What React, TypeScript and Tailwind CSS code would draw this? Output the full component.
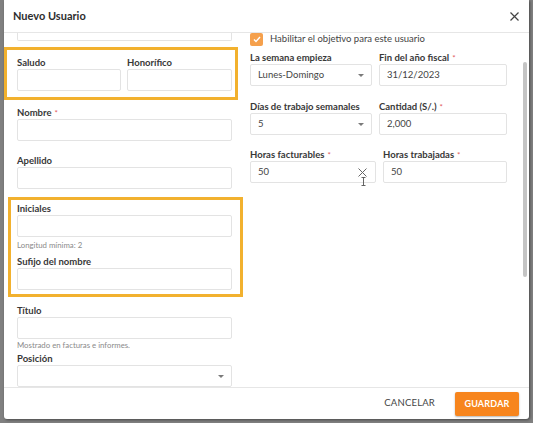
import React from 'react';

const font = { fontFamily: 'Lato, "Open Sans", sans-serif' };

const Label = ({ text, req }: { text: string; req?: boolean }) => (
  <div className="h-[13px] leading-[13px] text-[9.5px] font-bold text-[#383838] whitespace-nowrap">
    {text}
    {req && <span className="ml-[3px] text-[8px] font-normal text-[#e25b5b]">*</span>}
  </div>
);

const Caret = () => (
  <svg width="6" height="3" viewBox="0 0 6 3" className="shrink-0">
    <path d="M0 0 L6 0 L3 3 Z" fill="#7a7a7a" />
  </svg>
);

const Box = ({ value, select }: { value?: string; select?: boolean }) => (
  <div className="h-[22px] border border-[#e3e3e3] rounded-[2px] bg-white flex items-center justify-between pl-[7px] pr-[7px] text-[9.5px] text-[#444]">
    <span>{value}</span>
    {select && <Caret />}
  </div>
);

const Hint = ({ text }: { text: string }) => (
  <div className="h-[12px] leading-[12px] text-[7.8px] text-[#8a8a8a] whitespace-nowrap">{text}</div>
);

export default function App() {
  return (
    <div className="w-[533px] h-[423px] bg-[#808080] overflow-hidden pl-[4px]" style={font}>
      <div className="w-[525px] h-[419px] bg-white rounded-b-[3px] shadow-[1px_1px_3px_rgba(0,0,0,0.45)] flex flex-col">
        {/* Header */}
        <div className="h-[33px] shrink-0 border-b border-[#e6e6e6] flex items-center justify-between pl-[9px] pr-[10px]">
          <span className="text-[11px] font-bold text-[#2e2e2e]">Nuevo Usuario</span>
          <svg width="9" height="9" viewBox="0 0 9 9">
            <path d="M0.5 0.5 L8.5 8.5 M8.5 0.5 L0.5 8.5" stroke="#444" strokeWidth="1.2" />
          </svg>
        </div>

        {/* Body */}
        <div className="flex-1 flex overflow-hidden">
          <div className="flex pl-[13px] gap-[18px]">
            {/* Left column */}
            <div className="w-[215px] flex flex-col">
              <div className="h-[8px] shrink-0 border-x border-b border-[#e3e3e3] rounded-b-[2px]" />

              <div className="mt-[6px] -ml-[13px] w-[234px] border-[3px] border-[#f2b12e] pl-[10px] pr-[3px] pt-[6px] pb-[6px]">
                <div className="flex gap-[6px]">
                  <div className="w-[104px]">
                    <Label text="Saludo" />
                    <Box />
                  </div>
                  <div className="w-[105px]">
                    <Label text="Honorífico" />
                    <Box />
                  </div>
                </div>
              </div>

              <div className="mt-[6px]">
                <Label text="Nombre" req />
                <Box />
              </div>
              <div className="mt-[13px]">
                <Label text="Apellido" />
                <Box />
              </div>

              <div className="mt-[8px] -ml-[9px] w-[235px] border-[3px] border-[#f2b12e] pl-[6px] pr-[8px] pt-[2px] pb-[4px]">
                <Label text="Iniciales" />
                <Box />
                <div className="mt-[2px]">
                  <Hint text="Longitud mínima: 2" />
                </div>
                <div className="mt-[4px]">
                  <Label text="Sufijo del nombre" />
                  <Box />
                </div>
              </div>

              <div className="mt-[7px]">
                <Label text="Título" />
                <Box />
              </div>
              <Hint text="Mostrado en facturas e informes." />
              <div className="mt-[1px]">
                <Label text="Posición" />
                <Box select />
              </div>
            </div>

            {/* Right column */}
            <div className="w-[257px] flex flex-col">
              <div className="h-[12px] shrink-0 flex items-center gap-[7px]">
                <div className="w-[13px] h-[13px] rounded-[2px] bg-[#f5a04c] flex items-center justify-center">
                  <svg width="8" height="7" viewBox="0 0 8 7">
                    <path d="M1 3.5 L3 5.5 L7 1" stroke="#fff" strokeWidth="1.4" fill="none" />
                  </svg>
                </div>
                <span className="text-[9.5px] leading-[12px] text-[#444] whitespace-nowrap">
                  Habilitar el objetivo para este usuario
                </span>
              </div>

              <div className="mt-[6px] flex gap-[7px]">
                <div className="w-[122px]">
                  <Label text="La semana empieza" />
                  <Box value="Lunes-Domingo" select />
                </div>
                <div className="w-[128px]">
                  <Label text="Fin del año fiscal" req />
                  <Box value="31/12/2023" />
                </div>
              </div>

              <div className="mt-[14px] flex gap-[7px]">
                <div className="w-[122px]">
                  <Label text="Días de trabajo semanales" />
                  <Box value="5" select />
                </div>
                <div className="w-[128px]">
                  <Label text="Cantidad (S/.)" req />
                  <Box value="2,000" />
                </div>
              </div>

              <div className="mt-[13px] flex gap-[7px]">
                <div className="w-[126px] relative">
                  <Label text="Horas facturables" req />
                  <div className="h-[22px] border border-[#e3e3e3] rounded-[2px] flex items-center justify-between pl-[7px] pr-[8px] text-[9.5px] text-[#444]">
                    <span>50</span>
                    <svg width="9" height="9" viewBox="0 0 9 9">
                      <path d="M0.5 0.5 L8.5 8.5 M8.5 0.5 L0.5 8.5" stroke="#666" strokeWidth="1" />
                    </svg>
                  </div>
                  <svg width="5" height="9" viewBox="0 0 5 9" className="absolute left-[111px] top-[29px]">
                    <path d="M0.5 0.5 H4.5 M2.5 0.5 V8.5 M0.5 8.5 H4.5" stroke="#555" strokeWidth="0.9" />
                  </svg>
                </div>
                <div className="w-[124px]">
                  <Label text="Horas trabajadas" req />
                  <Box value="50" />
                </div>
              </div>
            </div>
          </div>

          {/* Scrollbar */}
          <div className="ml-[16px] w-[4px] pt-[29px]">
            <div className="h-[215px] w-[4px] rounded-[2px] bg-[#c4c4c4]" />
          </div>
        </div>

        {/* Footer */}
        <div className="h-[32px] shrink-0 border-t border-[#e6e6e6] flex items-center justify-end pr-[10px] gap-[20px]">
          <span className="text-[9.5px] text-[#444] tracking-[0.2px]">CANCELAR</span>
          <button className="h-[24px] w-[64px] rounded-[2px] bg-[#f7851d] text-white text-[9px] font-bold tracking-[0.2px] shadow-[0_1px_2px_rgba(0,0,0,0.3)]">
            GUARDAR
          </button>
        </div>
      </div>
    </div>
  );
}
